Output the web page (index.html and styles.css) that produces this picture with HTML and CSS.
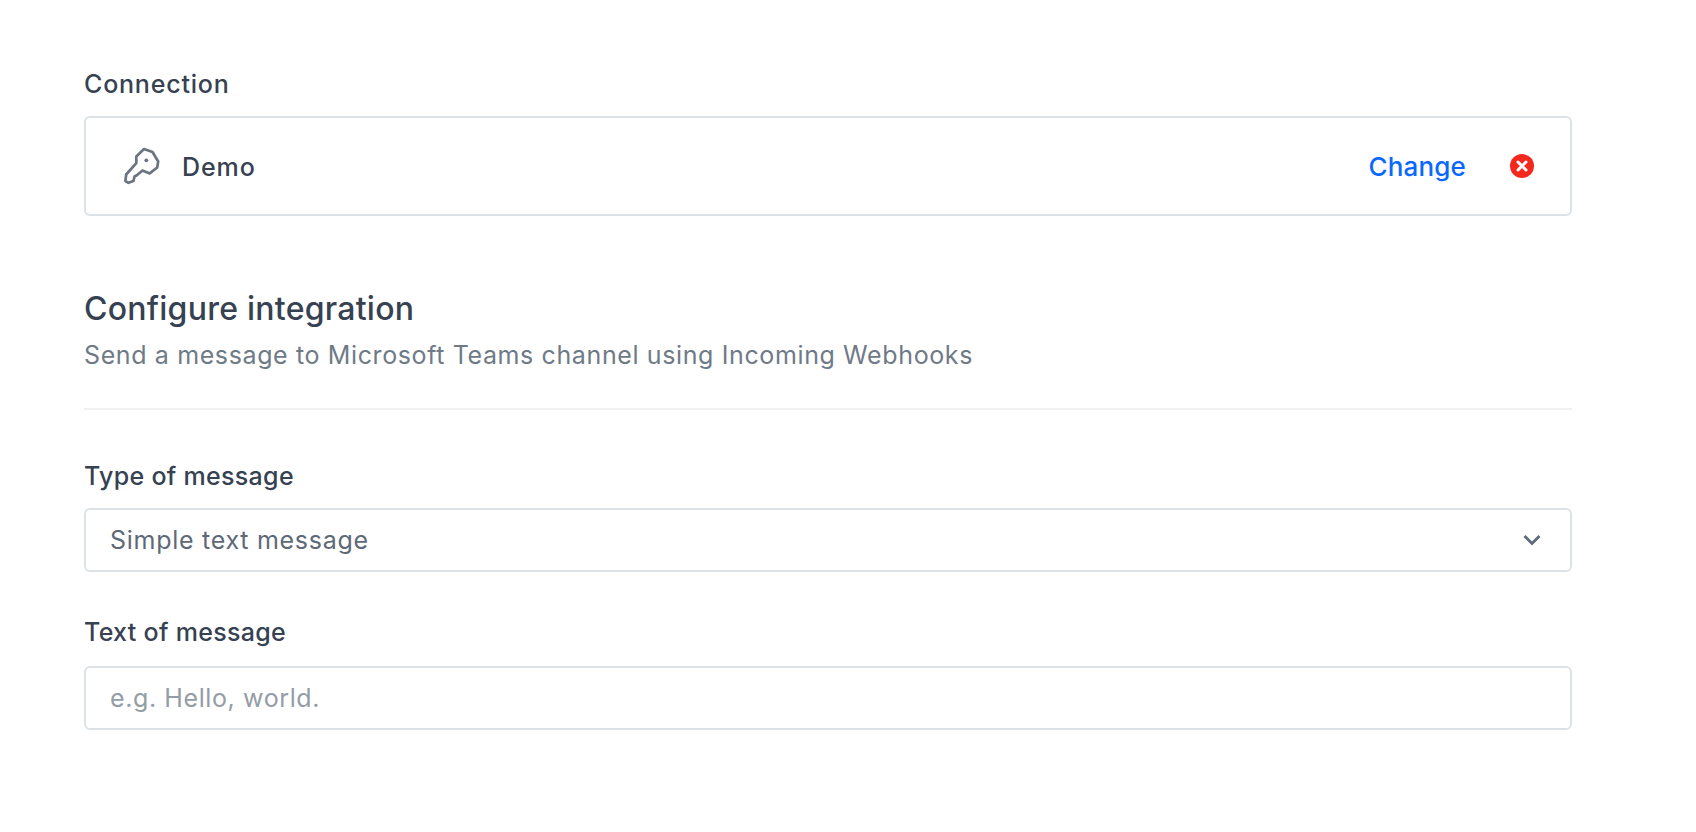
FILE: index.html
```html
<!DOCTYPE html>
<html lang="en">
<head>
    <meta charset="UTF-8">
    <meta name="viewport" content="width=device-width, initial-scale=1.0">
    <title>Configure integration</title>
    <link rel="stylesheet" href="styles.css">
</head>
<body>
    <div class="container">
        <div class="field-label connection-label">Connection</div>
        <div class="connection-box">
            <svg class="key-icon" width="40" height="40" viewBox="0 0 40 40" fill="none" stroke="#6b7480" stroke-width="2.7" stroke-linejoin="round">
                <path d="M22 3 L30.5 6 L36.2 15.5 L35.2 21.5 L27.7 27.4 L20.5 24.5 L14.5 29.5 L12.5 30.5 L11.5 35 L6.4 36.8 L3.4 35 L4.2 28.5 L14.3 17.2 L14.3 10.5 Z"/>
                <circle cx="24.3" cy="14.3" r="1.9" fill="#6b7480" stroke="none"/>
            </svg>
            <span class="connection-name">Demo</span>
            <a class="change-link" href="#">Change</a>
            <svg class="remove-icon" width="24" height="24" viewBox="0 0 24 24">
                <circle cx="12" cy="12" r="12" fill="#f5281e"/>
                <path d="M8 8 L16 16 M16 8 L8 16" stroke="#fff" stroke-width="3" stroke-linecap="round"/>
            </svg>
        </div>

        <h2 class="section-title">Configure integration</h2>
        <p class="section-desc">Send a message to Microsoft Teams channel using Incoming Webhooks</p>
        <div class="divider"></div>

        <div class="field-label type-label">Type of message</div>
        <div class="select-box">
            <span>Simple text message</span>
            <svg class="chevron" width="18" height="12" viewBox="0 0 18 12" fill="none" stroke="#626d7b" stroke-width="3">
                <path d="M1.5 2 L9 9.5 L16.5 2"/>
            </svg>
        </div>

        <div class="field-label text-label">Text of message</div>
        <input class="text-input" type="text" placeholder="e.g. Hello, world.">
    </div>
</body>
</html>
```

FILE: styles.css
```css
body {
    margin: 0;
    padding: 0;
    background-color: #fff;
    font-family: Inter, "Noto Sans", sans-serif;
    color: #364152;
}
.container {
    width: 1488px;
    margin-left: 84px;
    padding-top: 68px;
}
.field-label {
    font-size: 25px;
    line-height: 32px;
    font-weight: 500;
    letter-spacing: 0.3px;
}
.connection-label {
    letter-spacing: 0.8px;
}
.connection-box {
    display: flex;
    align-items: center;
    height: 100px;
    box-sizing: border-box;
    margin-top: 16px;
    padding: 0 36px;
    border: 2px solid #dde2e6;
    border-radius: 6px;
}
.key-icon {
    margin-right: 20px;
}
.connection-name {
    margin-top: 2px;
    font-size: 25px;
    font-weight: 500;
    letter-spacing: 0.9px;
}
.change-link {
    margin-left: auto;
    margin-right: 44px;
    font-size: 26px;
    font-weight: 500;
    letter-spacing: 0.15px;
    color: #0b68ff;
    text-decoration: none;
}
.section-title {
    margin: 71px 0 0;
    font-size: 32px;
    line-height: 44px;
    font-weight: 500;
    letter-spacing: 0.25px;
}
.section-desc {
    margin: 6px 0 0;
    font-size: 25px;
    line-height: 36px;
    letter-spacing: 0.62px;
    color: #6f7a87;
}
.divider {
    height: 2px;
    margin-top: 35px;
    background: #eff1f2;
}
.type-label {
    margin-top: 50px;
}
.select-box {
    display: flex;
    align-items: center;
    justify-content: space-between;
    height: 64px;
    box-sizing: border-box;
    margin-top: 16px;
    padding: 0 29px 0 24px;
    border: 2px solid #dde2e6;
    border-radius: 6px;
    font-size: 25px;
    letter-spacing: 0.72px;
    color: #5e6977;
}
.text-label {
    margin-top: 44px;
}
.text-input {
    display: block;
    width: 100%;
    height: 64px;
    box-sizing: border-box;
    margin-top: 18px;
    padding: 0 24px;
    border: 2px solid #dde2e6;
    border-radius: 6px;
    font-family: inherit;
    font-size: 25px;
    letter-spacing: 0.6px;
    outline: none;
}
.text-input::placeholder {
    color: #949ca6;
    opacity: 1;
}
```
